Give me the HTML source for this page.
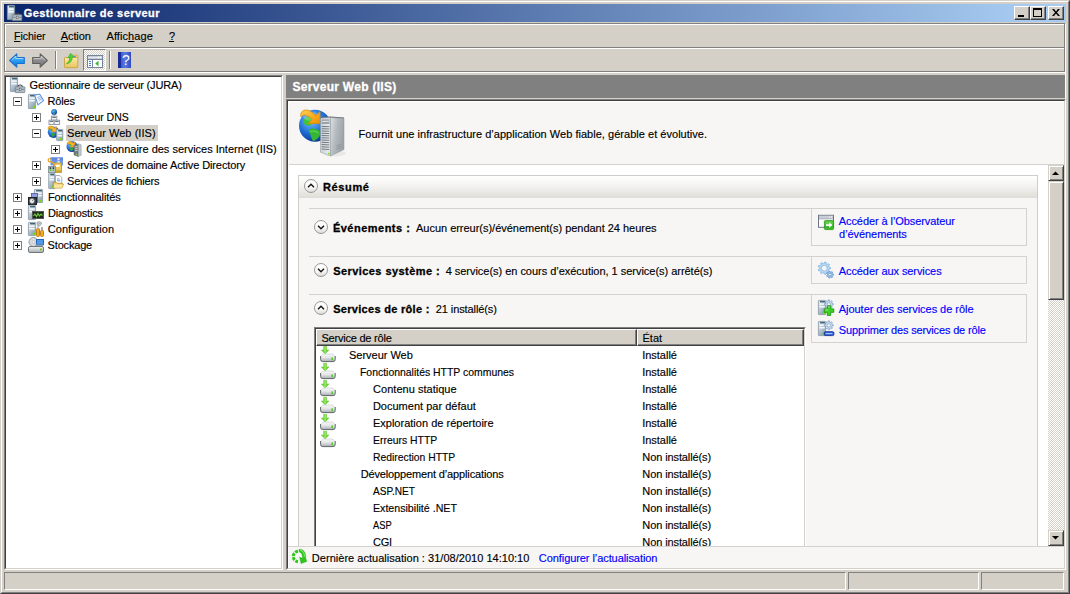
<!DOCTYPE html>
<html lang="fr">
<head>
<meta charset="utf-8">
<title>Gestionnaire de serveur</title>
<style>
*{box-sizing:border-box;margin:0;padding:0}
html,body{width:1070px;height:594px;overflow:hidden;background:#d4d0c8}
body{font-family:"Liberation Sans",sans-serif;font-size:11px;color:#000;position:relative}
.abs{position:absolute}
i{display:block}
.t{position:absolute;white-space:nowrap;line-height:13px;height:13px;transform-origin:0 0;-webkit-text-stroke:.15px currentColor}
.b{font-weight:bold;-webkit-text-stroke:.3px currentColor}
u{text-decoration:underline;text-underline-offset:1px}
svg{position:absolute;overflow:visible}
#frame{left:0;top:0;width:1070px;height:594px;border:1px solid;border-color:#d4d0c8 #404040 #404040 #d4d0c8}
#frame2{left:1px;top:1px;width:1068px;height:592px;border:1px solid;border-color:#fff #808080 #808080 #fff}
#title{left:4px;top:4px;width:1062px;height:18px;background:linear-gradient(to right,#0a246a 0%,#a6caf0 96%,#a6caf0 100%)}
.cap{position:absolute;top:6px;width:16px;height:14px;background:#d4d0c8;border:1px solid;border-color:#fff #404040 #404040 #fff;box-shadow:inset -1px -1px 0 #808080}
#rebarw{left:5px;top:24px;width:1061px;height:49px;border:1px solid #fff}
#rebar{left:4px;top:23px;width:1061px;height:49px;border:1px solid #808080}
#tree{left:4px;top:75px;width:279px;height:495px;background:#fff;border:1px solid;border-color:#808080 #fff #fff #808080}
#treei{left:5px;top:76px;width:277px;height:493px;border:1px solid;border-color:#404040 #d4d0c8 #d4d0c8 #404040}
.pm{position:absolute;width:9px;height:9px;border:1px solid #808080;background:#fff}
.pm:before{content:"";position:absolute;left:1px;top:3px;width:5px;height:1px;background:#000}
.pm.p:after{content:"";position:absolute;left:3px;top:1px;width:1px;height:5px;background:#000}
#hdr{left:286px;top:75px;width:779px;height:23px;background:#808080}
#det{left:286px;top:99px;width:780px;height:471px;background:#f7f6f4;border:1px solid;border-color:#808080 #fff #fff #808080}
#deti{left:287px;top:100px;width:778px;height:469px;border:1px solid;border-color:#404040 #d4d0c8 #d4d0c8 #404040;box-shadow:inset 1px 1px 0 #fff}
#view{left:289px;top:165px;width:759px;height:381px;background:#fff;overflow:hidden}
#resume{background:#f7f6f4;border:1px solid #cecdca}
#resumeh{background:linear-gradient(#fff 0%,#f4f3f0 45%,#dfddd7 100%)}
.a{color:#0000ff}
.hl{position:absolute;height:1px;background:#d3d2cf}
.box{position:absolute;border:1px solid #d3d2cf}
#tbl{background:#fff;border:1px solid;border-color:#808080 #fff #fff #808080}
#tbli{border:1px solid;border-color:#404040 #d4d0c8 #d4d0c8 #404040}
.th{position:absolute;height:17px;background:#d4d0c8;border:1px solid;border-color:#fff #404040 #404040 #fff;box-shadow:inset -1px -1px 0 #808080}
.sbb{position:absolute;background:#d4d0c8;border:1px solid;border-color:#d4d0c8 #404040 #404040 #d4d0c8;box-shadow:inset 1px 1px 0 #fff,inset -1px -1px 0 #808080}
.pane{position:absolute;top:572px;height:18px;border:1px solid;border-color:#808080 #fff #fff #808080}
</style>
</head>
<body>
<svg width="0" height="0" style="left:0;top:0"><defs>
<linearGradient id="gSrv" x1="0" y1="0" x2=".6" y2="1"><stop offset="0" stop-color="#e6edf2"/><stop offset=".45" stop-color="#c3d0da"/><stop offset="1" stop-color="#8ea2b1"/></linearGradient>
<linearGradient id="gSrvD" x1="0" y1="0" x2="1" y2="0"><stop offset="0" stop-color="#9aa3a8"/><stop offset="1" stop-color="#5d666b"/></linearGradient>
<radialGradient id="gGlobe" cx=".38" cy=".32" r=".75"><stop offset="0" stop-color="#7cc4ff"/><stop offset=".55" stop-color="#1f6fd6"/><stop offset="1" stop-color="#0b2f8c"/></radialGradient>
<linearGradient id="gBack" x1="0" y1="0" x2="0" y2="1"><stop offset="0" stop-color="#8fd4ff"/><stop offset=".5" stop-color="#2a9df4"/><stop offset="1" stop-color="#0b6fd0"/></linearGradient>
<linearGradient id="gFwd" x1="0" y1="0" x2="0" y2="1"><stop offset="0" stop-color="#c9c9c9"/><stop offset=".5" stop-color="#8c8c8c"/><stop offset="1" stop-color="#6f6f6f"/></linearGradient>
<linearGradient id="gFold" x1="0" y1="0" x2="0" y2="1"><stop offset="0" stop-color="#fbe9a6"/><stop offset="1" stop-color="#e9c45c"/></linearGradient>
<linearGradient id="gHelp" x1="0" y1="0" x2="1" y2="0"><stop offset="0" stop-color="#2b45b8"/><stop offset=".55" stop-color="#5a7be6"/><stop offset="1" stop-color="#2f49c0"/></linearGradient>
<linearGradient id="gCirc" x1="0" y1="0" x2="0" y2="1"><stop offset="0" stop-color="#ffffff"/><stop offset=".55" stop-color="#fbfbfa"/><stop offset="1" stop-color="#d9d7d2"/></linearGradient>
<linearGradient id="gDisk" x1="0" y1="0" x2="0" y2="1"><stop offset="0" stop-color="#f4f4f4"/><stop offset="1" stop-color="#a9adb0"/></linearGradient>
<linearGradient id="gBig" x1="0" y1="0" x2="1" y2="0"><stop offset="0" stop-color="#c9cfd3"/><stop offset="1" stop-color="#eceff1"/></linearGradient>
<linearGradient id="gBigS" x1="0" y1="0" x2="1" y2=".4"><stop offset="0" stop-color="#dfe2e4"/><stop offset=".5" stop-color="#b4b9bd"/><stop offset="1" stop-color="#9da3a8"/></linearGradient>
<linearGradient id="gOr" x1="0" y1="0" x2="1" y2="1"><stop offset="0" stop-color="#ffd257"/><stop offset=".6" stop-color="#f9a91a"/><stop offset="1" stop-color="#ee8f06"/></linearGradient>
<pattern id="pChk" width="2" height="2" patternUnits="userSpaceOnUse"><rect width="2" height="2" fill="#fff"/><rect width="1" height="1" fill="#d4d0c8"/><rect x="1" y="1" width="1" height="1" fill="#d4d0c8"/></pattern>
</defs></svg>
<div class="abs" id="frame"></div>
<div class="abs" id="frame2"></div>
<!-- TITLE BAR -->
<div class="abs" id="title"></div>
<svg style="left:7px;top:5px" width="16" height="16" viewBox="0 0 16 16"><rect x="0.4" y="0.4" width="7.2" height="14.2" rx=".6" fill="url(#gSrv)" stroke="#8797a4" stroke-width=".8"/><rect x="2" y="1.2" width="5" height="1.100" fill="#244a5c"/><rect x="1.3" y="3.4" width="5.4" height="1.500" fill="#f4f8fa"/><rect x="1.3" y="6" width="5.4" height="1.500" fill="#f4f8fa"/><path d="M7.800 10c0-2.600 4.600-2.600 4.600 0" fill="none" stroke="#3c4348" stroke-width="1.100"/><rect x="5.400" y="9.800" width="9.400" height="5.800" rx=".5" fill="#b4bec6" stroke="#76828b" stroke-width=".8"/><rect x="5.800" y="11.800" width="8.600" height="1.200" fill="#86929b"/><rect x="9.300" y="11.200" width="1.700" height="2.600" fill="#fafafa" stroke="#50585e" stroke-width=".5"/></svg>
<div class="t b" style="left:23.7px;top:7px;letter-spacing:0.450px;color:#fff;">Gestionnaire de serveur</div>
<div class="cap" style="left:1014px"><i class="abs" style="left:3px;top:8px;width:6px;height:2px;background:#000"></i></div>
<div class="cap" style="left:1030px"><i class="abs" style="left:2px;top:1px;width:9px;height:9px;border:1px solid #000;border-top-width:2px"></i></div>
<div class="cap" style="left:1048px"><svg style="left:3px;top:2px" width="8" height="7" viewBox="0 0 8 7"><path d="M0 0h2l2 2.5L6 0h2L5 3.5 8 7H6L4 4.5 2 7H0l3-3.5z" fill="#000"/></svg></div>
<!-- MENU + TOOLBAR -->
<div class="abs" id="rebarw"></div>
<div class="abs" id="rebar"></div>
<div class="abs" style="left:5px;top:47px;width:1059px;height:1px;background:#808080"></div>
<div class="abs" style="left:5px;top:48px;width:1059px;height:1px;background:#fff"></div>
<div class="abs" style="left:1065px;top:73px;width:1px;height:26px;background:#fff"></div>
<div class="t" style="left:13.8px;top:30px;transform:scaleX(0.9550);"><u>F</u>ichier</div>
<div class="t" style="left:60.8px;top:30px;letter-spacing:-0.125px;"><u>A</u>ction</div>
<div class="t" style="left:106.48px;top:30px;letter-spacing:0.087px;">Affic<u>h</u>age</div>
<div class="t" style="left:169px;top:30px;letter-spacing:-1px"><u>?</u></div>
<svg style="left:9px;top:53px" width="16" height="15" viewBox="0 0 16 15"><path d="M.700 7.500L7.800 .800v3.700h7.500v6H7.800v3.700z" fill="url(#gBack)" stroke="#1a6fd2" stroke-width="1.100" stroke-linejoin="round"/><path d="M2.600 7.300L7 3.200v2.300h7.200" fill="none" stroke="#c9ecff" stroke-width=".8" opacity=".8"/></svg><svg style="left:32px;top:53px" width="16" height="15" viewBox="0 0 16 15"><path d="M15.300 7.500L8.200 .800v3.700H.700v6h7.500v3.700z" fill="url(#gFwd)" stroke="#5f5f5f" stroke-width="1.100" stroke-linejoin="round"/><path d="M1.800 5.600h7.400V3.300l4.300 4" fill="none" stroke="#e6e6e6" stroke-width=".8" opacity=".7"/></svg><i class="abs" style="left:55px;top:51px;width:1px;height:18px;background:#808080"></i><i class="abs" style="left:56px;top:51px;width:1px;height:18px;background:#fff"></i><svg style="left:64px;top:52px" width="15" height="16" viewBox="0 0 15 16"><path d="M7 3.200h6.300l.500 .500v2.300H6z" fill="#f6dc86" stroke="#c9a342" stroke-width=".8"/><rect x="9.800" y="4" width="2" height="1" fill="#4f86e8"/><rect x=".500" y="5.500" width="13.300" height="10.200" rx=".600" fill="url(#gFold)" stroke="#c9a342" stroke-width=".9"/><path d="M2.300 11.800c2.300-1.200 3.400-3.400 3.300-6.200l-1.700 .300 2.700-4.600 3.300 3.700-1.700 .300c.300 3.200-1.700 6-5.900 6.500z" fill="#4cd238" stroke="#2fa320" stroke-width=".5" stroke-linejoin="round"/></svg><div class="abs" style="left:83px;top:49px;width:23px;height:22px;border:1px solid;border-color:#808080 #fff #fff #808080"></div><svg style="left:84px;top:50px" width="21" height="20" viewBox="0 0 21 20"><rect width="21" height="20" fill="url(#pChk)"/></svg><svg style="left:87px;top:55px" width="16" height="13" viewBox="0 0 16 13"><rect x=".500" y=".500" width="15" height="12" fill="#fff" stroke="#74849e"/><rect x="1" y="1" width="14" height="3" fill="#c3cbd8"/><rect x="1" y="2" width="14" height="1" fill="#e4e8ee"/><path d="M1 4.500h14" stroke="#74849e"/><rect x="11" y="1.500" width="1" height="1.500" fill="#fff"/><rect x="13" y="1.500" width="1" height="1.500" fill="#fff"/><path d="M5.500 4.500v8" stroke="#74849e"/><rect x="2" y="6" width="2" height="1" fill="#3f7fd8"/><rect x="2" y="8" width="2" height="1" fill="#3f7fd8"/><rect x="2" y="10" width="2" height="1" fill="#3f7fd8"/><path d="M8.200 8.500l3.300-2.700v5.400z" fill="#38b435"/></svg><i class="abs" style="left:109px;top:51px;width:1px;height:18px;background:#808080"></i><i class="abs" style="left:110px;top:51px;width:1px;height:18px;background:#fff"></i><svg style="left:118px;top:52px" width="13" height="16" viewBox="0 0 13 16"><rect width="13" height="16" fill="url(#gHelp)"/><rect width="3" height="16" fill="#1a2a96"/><text x="7.800" y="13" font-family="Liberation Sans,sans-serif" font-size="14" fill="#fff" text-anchor="middle">?</text></svg>
<!-- TREE -->
<div class="abs" id="tree"></div>
<div class="abs" id="treei"></div>
<svg style="left:10px;top:77px" width="16" height="16" viewBox="0 0 16 16"><rect x="0.4" y="0.4" width="7.2" height="14.2" rx=".6" fill="url(#gSrv)" stroke="#8797a4" stroke-width=".8"/><rect x="2" y="1.2" width="5" height="1.100" fill="#244a5c"/><rect x="1.3" y="3.4" width="5.4" height="1.500" fill="#f4f8fa"/><rect x="1.3" y="6" width="5.4" height="1.500" fill="#f4f8fa"/><path d="M7.800 10c0-2.600 4.600-2.600 4.600 0" fill="none" stroke="#3c4348" stroke-width="1.100"/><rect x="5.400" y="9.800" width="9.400" height="5.800" rx=".5" fill="#b4bec6" stroke="#76828b" stroke-width=".8"/><rect x="5.800" y="11.800" width="8.600" height="1.200" fill="#86929b"/><rect x="9.300" y="11.200" width="1.700" height="2.600" fill="#fafafa" stroke="#50585e" stroke-width=".5"/></svg>
<div class="t" style="left:29.54px;top:79px;letter-spacing:-0.141px;">Gestionnaire de serveur (JURA)</div>
<div class="pm" style="left:13px;top:97px"></div>
<svg style="left:28px;top:93px" width="16" height="16" viewBox="0 0 16 16"><rect x="0.4" y="1.4" width="7.2" height="14.2" rx=".6" fill="url(#gSrv)" stroke="#8797a4" stroke-width=".8"/><rect x="2" y="2.2" width="5" height="1.100" fill="#244a5c"/><rect x="1.3" y="4.4" width="5.4" height="1.500" fill="#f4f8fa"/><rect x="1.3" y="7" width="5.4" height="1.500" fill="#f4f8fa"/><rect x="4.8" y="12.8" width="2.200" height="2.200" fill="#6fdc1a"/><path d="M6.600 1.900l5.200-.600 3.700 6.300-5.500 4.300z" fill="#f6f9fe" stroke="#6496dc" stroke-width="1.100" stroke-linejoin="round"/><path d="M9.300 4.600l2.600-1.100M10.100 6.100l3-1.500M10.900 7.600l3-1.700" stroke="#7aa6e6" stroke-width=".8"/></svg>
<div class="t" style="left:47.52px;top:95px;letter-spacing:-0.158px;">Rôles</div>
<div class="pm p" style="left:32px;top:113px"></div>
<svg style="left:48px;top:109px" width="16" height="16" viewBox="0 0 16 16"><circle cx="6.1" cy="2.9" r="2.9" fill="url(#gGlobe)"/><path d="M4.408333333333333 1.45q0.9666666666666667 -0.9666666666666667 1.9333333333333333 -0.48333333333333334q-0.48333333333333334 0.9666666666666667 -0.725 1.45q-0.9666666666666667 0.24166666666666667 -1.2083333333333333 -0.9666666666666667z" fill="#3fbf3a"/><path d="M5.133333333333333 3.3833333333333333q1.2083333333333333 -0.24166666666666667 1.6916666666666667 0.725q-0.48333333333333334 1.2083333333333333 -1.2083333333333333 1.2083333333333333q-0.725 -0.725 -0.48333333333333334 -1.9333333333333333z" fill="#35a935"/><path d="M6.100 5.800v1.400" stroke="#8a949c" stroke-width="1"/><rect x="3.4" y="7.2" width="5.4" height="4" fill="#f2f4f6" stroke="#8a949c" stroke-width=".9"/><rect x="4.3" y="8.0" width="3.6000000000000005" height=".900" fill="#5a6a78"/><rect x="1" y="11.2" width="5.2" height="4.3" fill="#f2f4f6" stroke="#8a949c" stroke-width=".9"/><rect x="1.9" y="12.0" width="3.4000000000000004" height=".900" fill="#5a6a78"/><rect x="6.2" y="11.2" width="5.4" height="4.3" fill="#f2f4f6" stroke="#8a949c" stroke-width=".9"/><rect x="7.1000000000000005" y="12.0" width="3.6000000000000005" height=".900" fill="#5a6a78"/></svg>
<div class="t" style="left:67.01px;top:111px;transform:scaleX(0.9529);">Serveur DNS</div>
<div class="pm" style="left:32px;top:129px"></div>
<svg style="left:48px;top:125px" width="16" height="16" viewBox="0 0 16 16"><circle cx="5.6" cy="7.2" r="5.8" fill="url(#gGlobe)"/><path d="M2.2166666666666663 4.300000000000001q1.9333333333333333 -1.9333333333333333 3.8666666666666667 -0.9666666666666667q-0.9666666666666667 1.9333333333333333 -1.45 2.9q-1.9333333333333333 0.48333333333333334 -2.4166666666666665 -1.9333333333333333z" fill="#3fbf3a"/><path d="M3.666666666666666 8.166666666666666q2.4166666666666665 -0.48333333333333334 3.3833333333333333 1.45q-0.9666666666666667 2.4166666666666665 -2.4166666666666665 2.4166666666666665q-1.45 -1.45 -0.9666666666666667 -3.8666666666666667z" fill="#35a935"/><g transform="translate(-0.3 0.2) scale(1.0)"><path d="M6.700 2.800C5.200 .800 2.600 .300 1 1.600 .300 2.300 .300 3.400.600 4.200 1.400 3 2.900 2.700 5.200 4.800L3.500 6.600H8.600V1.300z" fill="#f8b42a" stroke="#d98c06" stroke-width=".6" stroke-linejoin="round"/></g><rect x="8.6" y="4.4" width="6.2" height="11.2" rx=".6" fill="url(#gSrv)" stroke="#8797a4" stroke-width=".8"/><rect x="10.2" y="5.2" width="4" height="1.100" fill="#244a5c"/><rect x="9.5" y="7.4" width="4.4" height="1.500" fill="#f4f8fa"/><rect x="9.5" y="10" width="4.4" height="1.500" fill="#f4f8fa"/><rect x="12.0" y="12.8" width="2.200" height="2.200" fill="#6fdc1a"/></svg>
<div class="abs" style="left:66px;top:125px;width:92px;height:16px;background:#d4d0c8"></div>
<div class="t" style="left:67.0px;top:127px;letter-spacing:0.050px;">Serveur Web (IIS)</div>
<div class="pm p" style="left:51px;top:145px"></div>
<svg style="left:67px;top:141px" width="16" height="16" viewBox="0 0 16 16"><circle cx="5" cy="5.5" r="5.5" fill="url(#gGlobe)"/><path d="M1.791666666666667 2.75q1.8333333333333333 -1.8333333333333333 3.6666666666666665 -0.9166666666666666q-0.9166666666666666 1.8333333333333333 -1.375 2.75q-1.8333333333333333 0.4583333333333333 -2.2916666666666665 -1.8333333333333333z" fill="#3fbf3a"/><path d="M3.166666666666667 6.416666666666667q2.2916666666666665 -0.4583333333333333 3.208333333333333 1.375q-0.9166666666666666 2.2916666666666665 -2.2916666666666665 2.2916666666666665q-1.375 -1.375 -0.9166666666666666 -3.6666666666666665z" fill="#35a935"/><g transform="translate(-0.2 -0.3) scale(0.95)"><path d="M6.700 2.800C5.200 .800 2.600 .300 1 1.600 .300 2.300 .300 3.400.600 4.200 1.400 3 2.900 2.700 5.200 4.800L3.500 6.600H8.600V1.300z" fill="#f8b42a" stroke="#d98c06" stroke-width=".6" stroke-linejoin="round"/></g><path d="M7 4.200l4.400-1.300v12.600l-4.400-1.500z" fill="#747c82" stroke="#575f65" stroke-width=".5"/><path d="M11.400 2.900l2.800 .900v10.400l-2.800 1.300z" fill="#c2c8cc" stroke="#8b9399" stroke-width=".5"/><path d="M7.800 6l2.800-.500M7.800 7.800l2.800-.400M7.800 9.600l2.800-.300" stroke="#d9dfe3" stroke-width=".8"/><rect x="8.800" y="13" width="1.300" height="1.300" fill="#7bd11f"/></svg>
<div class="t" style="left:86.37px;top:143px;letter-spacing:-0.010px;">Gestionnaire des services Internet (IIS)</div>
<div class="pm p" style="left:32px;top:161px"></div>
<svg style="left:48px;top:157px" width="16" height="16" viewBox="0 0 16 16"><rect x="2.500" y=".400" width="12.500" height="8" fill="#6c97ea"/><rect x="2.500" y=".400" width="12.500" height="3" fill="#4f7fe0" opacity=".6"/><circle cx="10.500" cy="2.300" r="1.200" fill="#f0d9c0"/><path d="M8.600 6c0-2.800 3.800-2.800 3.800 0z" fill="#e8e8f0"/><rect x="5.500" y="6" width="8" height="9.500" fill="#e8c65e" stroke="#b89226" stroke-width=".8"/><rect x="5.900" y="13.300" width="7.200" height="1.800" fill="#cfa63a"/><rect x="7.200" y="7.800" width="4.600" height="2.200" fill="#fffbe8"/><circle cx="1.900" cy="3.200" r="1.700" fill="none" stroke="#f0a01c" stroke-width="1.200"/><path d="M3.200 4.400l4 3.800" stroke="#f0a01c" stroke-width="1.300"/><rect x=".500" y="9.500" width="7" height="6.200" fill="#b9c4cc" stroke="#7c8a94" stroke-width=".8"/><rect x="1.600" y="10.300" width="1.600" height="1.600" fill="#2a2e30"/><rect x="4.600" y="10.300" width="1.600" height="1.600" fill="#2a2e30"/><rect x="1.600" y="12.300" width="1.600" height="1.600" fill="#4fd21a"/><rect x="4.600" y="12.300" width="1.600" height="1.600" fill="#4fd21a"/></svg>
<div class="t" style="left:67.0px;top:159px;letter-spacing:-0.112px;">Services de domaine Active Directory</div>
<div class="pm p" style="left:32px;top:177px"></div>
<svg style="left:48px;top:173px" width="16" height="16" viewBox="0 0 16 16"><rect x="0.7" y="0.4" width="6.2" height="15.2" rx=".6" fill="url(#gSrv)" stroke="#8797a4" stroke-width=".8"/><rect x="2.3" y="1.2" width="4" height="1.100" fill="#244a5c"/><rect x="1.6" y="3.4" width="4.4" height="1.500" fill="#f4f8fa"/><rect x="1.6" y="6" width="4.4" height="1.500" fill="#f4f8fa"/><rect x="4.1" y="12.8" width="2.200" height="2.200" fill="#6fdc1a"/><path d="M7.500 2.500h4.300l2 2v7h-6.300z" fill="#fff" stroke="#909ca6" stroke-width=".8"/><path d="M9 6h2.600M9 7.800h3.400" stroke="#5f92dc" stroke-width=".9"/><path d="M5.300 9.300h2.800l.900 1h5.200v1l1.300 0-1.700 3.700h-8.500z" fill="#f3d070" stroke="#b98d1c" stroke-width=".8" stroke-linejoin="round"/><path d="M6.500 11.500h8.700l-1.500 3.300h-8.200z" fill="#fbe6a0"/></svg>
<div class="t" style="left:67.0px;top:175px;letter-spacing:-0.149px;">Services de fichiers</div>
<div class="pm p" style="left:13px;top:193px"></div>
<svg style="left:28px;top:189px" width="16" height="16" viewBox="0 0 16 16"><rect x="6.4" y="0.4" width="8.2" height="13.2" rx=".6" fill="url(#gSrv)" stroke="#8797a4" stroke-width=".8"/><rect x="8" y="1.2" width="6" height="1.100" fill="#244a5c"/><rect x="7.3" y="3.4" width="6.4" height="1.500" fill="#f4f8fa"/><rect x="7.3" y="6" width="6.4" height="1.500" fill="#f4f8fa"/><rect x="11.8" y="10.8" width="2.200" height="2.200" fill="#6fdc1a"/><rect x="3.5" y="4.5" width="6" height="9" fill="#8f9fe0" stroke="#5562a8" stroke-width=".9"/><rect x="0.5" y="8.5" width="8" height="7" fill="#3a3f44" stroke="#1d2022"/><circle cx="4" cy="12" r="2.4" fill="#e9eef2" stroke="#888" stroke-width=".6"/><path d="M4 12l1.5-1.5" stroke="#555" stroke-width=".7"/></svg>
<div class="t" style="left:47.92px;top:191px;letter-spacing:-0.074px;">Fonctionnalités</div>
<div class="pm p" style="left:13px;top:209px"></div>
<svg style="left:28px;top:205px" width="16" height="16" viewBox="0 0 16 16"><rect x="0.4" y="0.4" width="7.2" height="14.2" rx=".6" fill="url(#gSrv)" stroke="#8797a4" stroke-width=".8"/><rect x="2" y="1.2" width="5" height="1.100" fill="#244a5c"/><rect x="1.3" y="3.4" width="5.4" height="1.500" fill="#f4f8fa"/><rect x="1.3" y="6" width="5.4" height="1.500" fill="#f4f8fa"/><rect x="4.8" y="11.8" width="2.200" height="2.200" fill="#6fdc1a"/><rect x="4.5" y="6.5" width="11" height="7" fill="#1c2a1a" stroke="#555"/><path d="M5.5 11l1.5-2 1.5 2.5 1.5-3 1.5 2.5 1.5-2 1.5 1.5" fill="none" stroke="#6fd03a" stroke-width="1.1"/></svg>
<div class="t" style="left:47.9px;top:207px;letter-spacing:-0.172px;">Diagnostics</div>
<div class="pm p" style="left:13px;top:225px"></div>
<svg style="left:28px;top:221px" width="16" height="16" viewBox="0 0 16 16"><rect x="0.4" y="1.4" width="7.2" height="13.2" rx=".6" fill="url(#gSrv)" stroke="#8797a4" stroke-width=".8"/><rect x="2" y="2.2" width="5" height="1.100" fill="#244a5c"/><rect x="1.3" y="4.4" width="5.4" height="1.500" fill="#f4f8fa"/><rect x="1.3" y="7" width="5.4" height="1.500" fill="#f4f8fa"/><rect x="4.8" y="11.8" width="2.200" height="2.200" fill="#6fdc1a"/><path d="M9 1.5c2-1.5 4-.5 4.5 1.5l-2 1.8-1.8-.6z" fill="#d5dadd" stroke="#7d868c" stroke-width=".8"/><path d="M9.5 4l4-3" stroke="#aeb5ba" stroke-width="1.5"/><rect x="8.5" y="7.5" width="3" height="8" rx="1" fill="#f5a91a" stroke="#b26f06" stroke-width=".8"/><rect x="9.3" y="4.5" width="1.4" height="3" fill="#aeb5ba"/><rect x="12.5" y="9.5" width="3" height="6" rx="1" fill="#f5a91a" stroke="#b26f06" stroke-width=".8"/><rect x="13.3" y="6" width="1.4" height="3.5" fill="#888"/></svg>
<div class="t" style="left:47.68px;top:223px;letter-spacing:0.084px;">Configuration</div>
<div class="pm p" style="left:13px;top:241px"></div>
<svg style="left:28px;top:237px" width="16" height="16" viewBox="0 0 16 16"><circle cx="5.5" cy="5" r="4.5" fill="#d9dde0" stroke="#8a9298" stroke-width=".9"/><circle cx="5.5" cy="5" r="1.4" fill="#fff" stroke="#999" stroke-width=".5"/><rect x="8.5" y="2.5" width="7" height="5" fill="#4d9be8" stroke="#2866b3"/><rect x="7.5" y="7.5" width="8" height="1.5" fill="#8fa4b8"/><rect x="0.5" y="9.5" width="15" height="6" rx="1.5" fill="url(#gDisk)" stroke="#70787e"/><rect x="12" y="11.5" width="2" height="2" fill="#6fd11c"/></svg>
<div class="t" style="left:47.6px;top:239px;letter-spacing:-0.174px;">Stockage</div>
<!-- DETAILS -->
<div class="abs" id="hdr"></div>
<div class="t b" style="left:292.53px;top:80px;letter-spacing:0.284px;font-size:12px;line-height:14px;height:14px;color:#fff;">Serveur Web (IIS)</div>
<div class="abs" id="det"></div>
<div class="abs" id="deti"></div>
<svg style="left:299px;top:107px" width="48" height="52" viewBox="0 0 48 52"><ellipse cx="36" cy="46.500" rx="11" ry="3" fill="#e9e8e5"/><circle cx="16" cy="18.700" r="16" fill="url(#gGlobe)"/><path d="M4.500 14.500C5.500 9 12 6.500 18 8.500 20 10 16.500 12 17.500 14.500 15.500 17.500 12.500 15.500 11.500 18.500 9.500 19.500 8.500 17.500 7 18 5.500 17.500 4 16.500 4.500 14.500z" fill="#3cc43a"/><path d="M9.500 23C13 20.500 19.500 21.500 21.500 25 21.500 29.500 17.500 33.500 14 34 12 31.500 12 27.500 9.500 23z" fill="#35b535"/><path d="M11 25c3-1.500 6-1 8 1" fill="none" stroke="#6fe25a" stroke-width="1.200" opacity=".7"/><ellipse cx="12" cy="9.500" rx="8" ry="4.500" fill="#fff" opacity=".22"/><path d="M16.800 8.800C13 4 7 1 3 4.500 1.500 6 1.500 8.500 2 10 3.500 7.500 7 6.500 13.200 12.400L9 16.600H21V4.600z" fill="url(#gOr)" stroke="#d98a06" stroke-width=".8" stroke-linejoin="round"/><path d="M21.500 10.300L31.400 9.600 45 10.500 45 12 31.400 12 21.500 12z" fill="#5f676d"/><path d="M21.500 11L31.400 10.600V49L21.500 45.200z" fill="url(#gBig)" stroke="#8a9298" stroke-width=".5"/><path d="M31.400 10.600L45 11.200V42.600L31.400 49z" fill="url(#gBigS)" stroke="#8a9298" stroke-width=".5"/><path d="M22.600 12.600l7.800-.300v4.600l-7.800.100z" fill="#9aa3a9"/><path d="M23.200 14.400l6.600-.100" stroke="#eef1f3" stroke-width=".9"/><path d="M22.700 19.50l7.600 0.20" stroke="#727b82" stroke-width="1"/><path d="M22.700 21.75l7.600 0.23" stroke="#727b82" stroke-width="1"/><path d="M22.700 24.00l7.600 0.26" stroke="#727b82" stroke-width="1"/><path d="M22.700 26.25l7.600 0.29" stroke="#727b82" stroke-width="1"/><path d="M22.700 28.50l7.600 0.32" stroke="#727b82" stroke-width="1"/><path d="M22.700 30.75l7.600 0.35" stroke="#727b82" stroke-width="1"/><path d="M22.700 33.00l7.600 0.38" stroke="#727b82" stroke-width="1"/><path d="M22.700 35.25l7.600 0.41" stroke="#727b82" stroke-width="1"/><path d="M22.700 37.50l7.600 0.44" stroke="#727b82" stroke-width="1"/><path d="M22.700 39.75l7.600 0.47" stroke="#727b82" stroke-width="1"/><path d="M22.700 42.00l7.600 0.50" stroke="#727b82" stroke-width="1"/><rect x="29" y="45.800" width="1.700" height="1.700" fill="#7fe01f"/><path d="M37.500 38.800l5-1.800M37.500 40.600l5-1.800M37.500 42.400l5-1.800" stroke="#8d949a" stroke-width=".7"/></svg>
<div class="t" style="left:358.51px;top:128px;letter-spacing:0.028px;">Fournit une infrastructure d’application Web fiable, gérable et évolutive.</div>
<div class="hl" style="left:289px;top:164px;width:775px"></div>
<div class="abs" id="view">
<div class="abs" id="resume" style="left:9px;top:10px;width:740px;height:600px"></div>
<div class="abs" id="resumeh" style="left:10px;top:11px;width:738px;height:22px"></div>
<svg style="left:15px;top:14px" width="14" height="14" viewBox="0 0 14 14"><circle cx="7" cy="7" r="6.500" fill="url(#gCirc)" stroke="#8e8e8e" stroke-width=".9"/><path d="M4 8.200l3-3 3 3" fill="none" stroke="#1a1a1a" stroke-width="1.500"/></svg>
<div class="t b" style="left:33.91px;top:16px;letter-spacing:0.653px;">Résumé</div>
<div class="hl" style="left:20px;top:43px;width:503px"></div>
<div class="hl" style="left:20px;top:91px;width:503px"></div>
<div class="hl" style="left:20px;top:129px;width:503px"></div>
<svg style="left:25px;top:55px" width="14" height="14" viewBox="0 0 14 14"><circle cx="7" cy="7" r="6.500" fill="url(#gCirc)" stroke="#8e8e8e" stroke-width=".9"/><path d="M4 5.800l3 3 3-3" fill="none" stroke="#1a1a1a" stroke-width="1.500"/></svg>
<div class="t b" style="left:43.94px;top:57px;letter-spacing:0.488px;">Événements :</div>
<div class="t" style="left:127.04px;top:57px;letter-spacing:-0.023px;">Aucun erreur(s)/événement(s) pendant 24 heures</div>
<svg style="left:25px;top:98px" width="14" height="14" viewBox="0 0 14 14"><circle cx="7" cy="7" r="6.500" fill="url(#gCirc)" stroke="#8e8e8e" stroke-width=".9"/><path d="M4 5.800l3 3 3-3" fill="none" stroke="#1a1a1a" stroke-width="1.500"/></svg>
<div class="t b" style="left:44.16px;top:100px;letter-spacing:0.439px;">Services système :</div>
<div class="t" style="left:156.65px;top:100px;letter-spacing:-0.027px;">4 service(s) en cours d’exécution, 1 service(s) arrêté(s)</div>
<svg style="left:25px;top:136px" width="14" height="14" viewBox="0 0 14 14"><circle cx="7" cy="7" r="6.500" fill="url(#gCirc)" stroke="#8e8e8e" stroke-width=".9"/><path d="M4 8.200l3-3 3 3" fill="none" stroke="#1a1a1a" stroke-width="1.500"/></svg>
<div class="t b" style="left:44.16px;top:138px;letter-spacing:0.304px;">Services de rôle :</div>
<div class="t" style="left:146.79px;top:138px;letter-spacing:-0.095px;">21 installé(s)</div>
<div class="box" style="left:522px;top:43px;width:216px;height:38px"></div>
<div class="box" style="left:522px;top:91px;width:216px;height:28px"></div>
<div class="box" style="left:522px;top:129px;width:216px;height:49px"></div>
<svg style="left:529px;top:49px" width="16" height="16" viewBox="0 0 16 16"><rect x=".500" y="1.300" width="15" height="12" fill="#fff" stroke="#6c7383"/><rect x="1" y="1.800" width="14" height="2.600" fill="#c9cdd8"/><path d="M1 4.800h14" stroke="#8a90a0" stroke-width=".8"/><rect x="11" y="2.500" width="1" height="1" fill="#fff"/><rect x="13" y="2.500" width="1" height="1" fill="#fff"/><rect x="6.400" y="6.600" width="9.200" height="9" rx="1" fill="#3db82b" stroke="#2a9a1c" stroke-width=".8"/><rect x="7.200" y="7.300" width="7.600" height="3" rx=".5" fill="#7fe06a" opacity=".55"/><path d="M8 10.300h3.200v-1.900l3.300 2.700-3.300 2.700v-1.900h-3.200z" fill="#fff"/></svg>
<div class="t a" style="left:549.74px;top:50px;letter-spacing:-0.078px;">Accéder à l’Observateur</div>
<div class="t a" style="left:550.08px;top:63px;letter-spacing:-0.069px;">d’événements</div>
<svg style="left:529px;top:97px" width="16" height="16" viewBox="0 0 16 16"><path d="M12.47 5.55L12.47 6.85L10.76 7.31L10.43 8.22L11.44 9.67L10.61 10.66L9.00 9.92L8.17 10.40L8.01 12.16L6.73 12.38L5.98 10.79L5.03 10.62L3.78 11.86L2.66 11.22L3.10 9.51L2.49 8.77L0.73 8.92L0.28 7.70L1.73 6.68L1.73 5.72L0.28 4.70L0.73 3.48L2.49 3.63L3.10 2.89L2.66 1.18L3.78 0.54L5.03 1.78L5.98 1.61L6.73 0.02L8.01 0.24L8.17 2.00L9.00 2.48L10.61 1.74L11.44 2.73L10.43 4.18L10.76 5.09z" fill="#b9d9f3" stroke="#7fb2e2" stroke-width=".8"/><circle cx="6.300" cy="6.200" r="2.900" fill="#f7f6f3" stroke="#8dbce6" stroke-width=".9"/><path d="M15.57 12.12L15.57 13.08L14.38 13.37L14.09 13.98L14.60 15.09L13.85 15.69L12.88 14.94L12.22 15.09L11.68 16.19L10.74 15.97L10.72 14.75L10.19 14.33L9.00 14.58L8.58 13.71L9.52 12.94L9.52 12.26L8.58 11.49L9.00 10.62L10.19 10.87L10.72 10.45L10.74 9.23L11.68 9.01L12.22 10.11L12.88 10.26L13.85 9.51L14.60 10.11L14.09 11.22L14.38 11.83z" fill="#9cc0e8" stroke="#5e8fd0" stroke-width=".7"/><circle cx="12" cy="12.600" r="1.200" fill="#f7f6f3" stroke="#5e8fd0" stroke-width=".5"/></svg>
<div class="t a" style="left:549.74px;top:100px;letter-spacing:-0.086px;">Accéder aux services</div>
<svg style="left:529px;top:135px" width="16" height="16" viewBox="0 0 16 16"><rect x="0.4" y="0.4" width="7.2" height="14.2" rx=".6" fill="url(#gSrv)" stroke="#8797a4" stroke-width=".8"/><rect x="2" y="1.2" width="5" height="1.100" fill="#244a5c"/><rect x="1.3" y="3.4" width="5.4" height="1.500" fill="#f4f8fa"/><rect x="1.3" y="6" width="5.4" height="1.500" fill="#f4f8fa"/><rect x="4.8" y="11.8" width="2.200" height="2.200" fill="#6fdc1a"/><path d="M15.27 3.77L15.27 4.83L13.88 5.17L13.59 5.86L14.33 7.09L13.59 7.83L12.36 7.09L11.67 7.38L11.33 8.77L10.27 8.77L9.93 7.38L9.24 7.09L8.01 7.83L7.27 7.09L8.01 5.86L7.72 5.17L6.33 4.83L6.33 3.77L7.72 3.43L8.01 2.74L7.27 1.51L8.01 0.77L9.24 1.51L9.93 1.22L10.27 -0.17L11.33 -0.17L11.67 1.22L12.36 1.51L13.59 0.77L14.33 1.51L13.59 2.74L13.88 3.43z" fill="#cfe0f2" stroke="#7f9fc8" stroke-width=".8"/><circle cx="10.800" cy="4.300" r="1.700" fill="#f7f6f3" stroke="#7f9fc8" stroke-width=".7"/><path d="M9.300 5.800h3.400v3.100h3.100v3.400h-3.100v3.100h-3.400v-3.100h-3.100v-3.400h3.100z" fill="#3fd027" stroke="#1b9a0f" stroke-width=".9" stroke-linejoin="round"/><path d="M10.200 6.900h1.600M7.200 10h2.900" stroke="#a4f28e" stroke-width=".9"/></svg>
<div class="t a" style="left:549.74px;top:138px;letter-spacing:-0.034px;">Ajouter des services de rôle</div>
<svg style="left:529px;top:156px" width="16" height="16" viewBox="0 0 16 16"><rect x="0.4" y="0.4" width="7.2" height="14.2" rx=".6" fill="url(#gSrv)" stroke="#8797a4" stroke-width=".8"/><rect x="2" y="1.2" width="5" height="1.100" fill="#244a5c"/><rect x="1.3" y="3.4" width="5.4" height="1.500" fill="#f4f8fa"/><rect x="1.3" y="6" width="5.4" height="1.500" fill="#f4f8fa"/><rect x="4.8" y="11.8" width="2.200" height="2.200" fill="#6fdc1a"/><path d="M15.27 3.77L15.27 4.83L13.88 5.17L13.59 5.86L14.33 7.09L13.59 7.83L12.36 7.09L11.67 7.38L11.33 8.77L10.27 8.77L9.93 7.38L9.24 7.09L8.01 7.83L7.27 7.09L8.01 5.86L7.72 5.17L6.33 4.83L6.33 3.77L7.72 3.43L8.01 2.74L7.27 1.51L8.01 0.77L9.24 1.51L9.93 1.22L10.27 -0.17L11.33 -0.17L11.67 1.22L12.36 1.51L13.59 0.77L14.33 1.51L13.59 2.74L13.88 3.43z" fill="#cfe0f2" stroke="#7f9fc8" stroke-width=".8"/><circle cx="10.800" cy="4.300" r="1.700" fill="#f7f6f3" stroke="#7f9fc8" stroke-width=".7"/><rect x="6.200" y="10.700" width="9.700" height="3.900" rx="1.300" fill="#2c55d6" stroke="#15329a" stroke-width=".9"/><rect x="7.600" y="11.900" width="6.900" height="1.300" fill="#9cc0f6"/></svg>
<div class="t a" style="left:549.85px;top:159px;letter-spacing:-0.160px;">Supprimer des services de rôle</div>
<div class="abs" id="tbl" style="left:25px;top:162px;width:492px;height:300px"></div>
<div class="abs" id="tbli" style="left:26px;top:163px;width:490px;height:298px"></div>
<div class="th" style="left:27px;top:164px;width:321px"></div>
<div class="th" style="left:348px;top:164px;width:167px"></div>
<div class="t" style="left:32.5px;top:167px;letter-spacing:-0.220px;">Service de rôle</div>
<div class="t" style="left:353.5px;top:167px;">État</div>
<svg style="left:31px;top:181px" width="16" height="17" viewBox="0 0 16 17"><path d="M3.600 .300h3v3.600h2.400l-3.900 4.100-3.900-4.100h2.400z" fill="#6fd637" stroke="#55bd28" stroke-width=".4"/><path d="M5.100 .600v6.200" stroke="#b9f293" stroke-width=".9"/><path d="M2.800 7.900h10l2.600 3h-15.200z" fill="#efefef" stroke="#c4c6c8" stroke-width=".5"/><path d="M.600 10.400h14.600v3a2.200 2.200 0 0 1-2.200 2.200h-10.200a2.200 2.200 0 0 1-2.200-2.200z" fill="url(#gDisk)"/><path d="M.600 10v3.400a2.200 2.200 0 0 0 2.200 2.200h10.200a2.200 2.200 0 0 0 2.200-2.200v-3.400" fill="none" stroke="#5f666b" stroke-width="1"/><rect x="11.400" y="11.400" width="1.500" height="2.800" fill="#44d11c"/></svg>
<div class="t" style="left:60.01px;top:184px;letter-spacing:-0.017px;">Serveur Web</div>
<div class="t" style="left:353.18px;top:184px;letter-spacing:-0.010px;">Installé</div>
<svg style="left:31px;top:198px" width="16" height="17" viewBox="0 0 16 17"><path d="M3.600 .300h3v3.600h2.400l-3.900 4.100-3.900-4.100h2.400z" fill="#6fd637" stroke="#55bd28" stroke-width=".4"/><path d="M5.100 .600v6.200" stroke="#b9f293" stroke-width=".9"/><path d="M2.800 7.900h10l2.600 3h-15.200z" fill="#efefef" stroke="#c4c6c8" stroke-width=".5"/><path d="M.600 10.400h14.600v3a2.200 2.200 0 0 1-2.200 2.200h-10.200a2.200 2.200 0 0 1-2.200-2.200z" fill="url(#gDisk)"/><path d="M.600 10v3.400a2.200 2.200 0 0 0 2.200 2.200h10.200a2.200 2.200 0 0 0 2.200-2.200v-3.400" fill="none" stroke="#5f666b" stroke-width="1"/><rect x="11.400" y="11.400" width="1.500" height="2.800" fill="#44d11c"/></svg>
<div class="t" style="left:71.22px;top:201px;transform:scaleX(0.9483);">Fonctionnalités HTTP communes</div>
<div class="t" style="left:353.18px;top:201px;letter-spacing:-0.010px;">Installé</div>
<svg style="left:31px;top:215px" width="16" height="17" viewBox="0 0 16 17"><path d="M3.600 .300h3v3.600h2.400l-3.900 4.100-3.900-4.100h2.400z" fill="#6fd637" stroke="#55bd28" stroke-width=".4"/><path d="M5.100 .600v6.200" stroke="#b9f293" stroke-width=".9"/><path d="M2.800 7.900h10l2.600 3h-15.200z" fill="#efefef" stroke="#c4c6c8" stroke-width=".5"/><path d="M.600 10.400h14.600v3a2.200 2.200 0 0 1-2.200 2.200h-10.200a2.200 2.200 0 0 1-2.200-2.200z" fill="url(#gDisk)"/><path d="M.600 10v3.400a2.200 2.200 0 0 0 2.200 2.200h10.200a2.200 2.200 0 0 0 2.200-2.200v-3.400" fill="none" stroke="#5f666b" stroke-width="1"/><rect x="11.400" y="11.400" width="1.500" height="2.800" fill="#44d11c"/></svg>
<div class="t" style="left:84.08px;top:218px;letter-spacing:0.024px;">Contenu statique</div>
<div class="t" style="left:353.18px;top:218px;letter-spacing:-0.010px;">Installé</div>
<svg style="left:31px;top:232px" width="16" height="17" viewBox="0 0 16 17"><path d="M3.600 .300h3v3.600h2.400l-3.900 4.100-3.900-4.100h2.400z" fill="#6fd637" stroke="#55bd28" stroke-width=".4"/><path d="M5.100 .600v6.200" stroke="#b9f293" stroke-width=".9"/><path d="M2.800 7.900h10l2.600 3h-15.200z" fill="#efefef" stroke="#c4c6c8" stroke-width=".5"/><path d="M.600 10.400h14.600v3a2.200 2.200 0 0 1-2.200 2.200h-10.200a2.200 2.200 0 0 1-2.200-2.200z" fill="url(#gDisk)"/><path d="M.600 10v3.400a2.200 2.200 0 0 0 2.200 2.200h10.200a2.200 2.200 0 0 0 2.200-2.200v-3.400" fill="none" stroke="#5f666b" stroke-width="1"/><rect x="11.400" y="11.400" width="1.500" height="2.800" fill="#44d11c"/></svg>
<div class="t" style="left:83.9px;top:235px;letter-spacing:0.013px;">Document par défaut</div>
<div class="t" style="left:353.18px;top:235px;letter-spacing:-0.010px;">Installé</div>
<svg style="left:31px;top:249px" width="16" height="17" viewBox="0 0 16 17"><path d="M3.600 .300h3v3.600h2.400l-3.900 4.100-3.900-4.100h2.400z" fill="#6fd637" stroke="#55bd28" stroke-width=".4"/><path d="M5.100 .600v6.200" stroke="#b9f293" stroke-width=".9"/><path d="M2.800 7.900h10l2.600 3h-15.200z" fill="#efefef" stroke="#c4c6c8" stroke-width=".5"/><path d="M.600 10.400h14.600v3a2.200 2.200 0 0 1-2.200 2.200h-10.200a2.200 2.200 0 0 1-2.200-2.200z" fill="url(#gDisk)"/><path d="M.600 10v3.400a2.200 2.200 0 0 0 2.200 2.200h10.200a2.200 2.200 0 0 0 2.200-2.200v-3.400" fill="none" stroke="#5f666b" stroke-width="1"/><rect x="11.400" y="11.400" width="1.500" height="2.800" fill="#44d11c"/></svg>
<div class="t" style="left:83.92px;top:252px;letter-spacing:0.012px;">Exploration de répertoire</div>
<div class="t" style="left:353.18px;top:252px;letter-spacing:-0.010px;">Installé</div>
<svg style="left:31px;top:266px" width="16" height="17" viewBox="0 0 16 17"><path d="M3.600 .300h3v3.600h2.400l-3.900 4.100-3.900-4.100h2.400z" fill="#6fd637" stroke="#55bd28" stroke-width=".4"/><path d="M5.100 .600v6.200" stroke="#b9f293" stroke-width=".9"/><path d="M2.800 7.900h10l2.600 3h-15.200z" fill="#efefef" stroke="#c4c6c8" stroke-width=".5"/><path d="M.600 10.400h14.600v3a2.200 2.200 0 0 1-2.200 2.200h-10.200a2.200 2.200 0 0 1-2.200-2.200z" fill="url(#gDisk)"/><path d="M.600 10v3.400a2.200 2.200 0 0 0 2.200 2.200h10.200a2.200 2.200 0 0 0 2.200-2.200v-3.400" fill="none" stroke="#5f666b" stroke-width="1"/><rect x="11.400" y="11.400" width="1.500" height="2.800" fill="#44d11c"/></svg>
<div class="t" style="left:83.52px;top:269px;transform:scaleX(0.9470);">Erreurs HTTP</div>
<div class="t" style="left:353.18px;top:269px;letter-spacing:-0.010px;">Installé</div>
<div class="t" style="left:83.52px;top:286px;transform:scaleX(0.9411);">Redirection HTTP</div>
<div class="t" style="left:353.33px;top:286px;letter-spacing:-0.105px;">Non installé(s)</div>
<div class="t" style="left:71.7px;top:303px;letter-spacing:-0.140px;">Développement d’applications</div>
<div class="t" style="left:353.33px;top:303px;letter-spacing:-0.105px;">Non installé(s)</div>
<div class="t" style="left:84.32px;top:320px;transform:scaleX(0.9194);">ASP.NET</div>
<div class="t" style="left:353.33px;top:320px;letter-spacing:-0.105px;">Non installé(s)</div>
<div class="t" style="left:83.52px;top:337px;transform:scaleX(0.9665);">Extensibilité .NET</div>
<div class="t" style="left:353.33px;top:337px;letter-spacing:-0.105px;">Non installé(s)</div>
<div class="t" style="left:84.29px;top:354px;transform:scaleX(0.8483);">ASP</div>
<div class="t" style="left:353.33px;top:354px;letter-spacing:-0.105px;">Non installé(s)</div>
<div class="t" style="left:84.08px;top:371px;letter-spacing:-0.272px;">CGI</div>
<div class="t" style="left:353.33px;top:371px;letter-spacing:-0.105px;">Non installé(s)</div>
</div>
<svg style="left:1048px;top:165px" width="16" height="381" viewBox="0 0 16 381"><rect width="16" height="381" fill="url(#pChk)"/></svg><div class="sbb" style="left:1048px;top:165px;width:16px;height:16px"><svg style="left:3px;top:5px" width="7" height="4" viewBox="0 0 7 4"><path d="M0 4L3.500 0.500 7 4z" fill="#000"/></svg></div><div class="sbb" style="left:1048px;top:181px;width:16px;height:119px"></div><div class="sbb" style="left:1048px;top:530px;width:16px;height:16px"><svg style="left:3px;top:5px" width="7" height="4" viewBox="0 0 7 4"><path d="M0 0L3.500 3.500 7 0z" fill="#000"/></svg></div>
<div class="hl" style="left:288px;top:546px;width:776px"></div>
<svg style="left:291px;top:549px" width="16" height="16" viewBox="0 0 16 16"><path d="M8.100 .200C12.300 .200 15.300 3.600 14.600 8.800L15.700 12.400 10.100 14.600 8.600 8.200 11.400 9.300C12 5.800 10.500 3.300 8.100 2.900z" fill="#2bc71a" stroke="#1fa012" stroke-width=".4"/><path d="M9.300 1.300c2.600.500 4.400 3 4.100 6.300" fill="none" stroke="#86f26c" stroke-width="1"/><path d="M6.950 2.240A5.300 5.300 0 0 0 6.950 12.760" fill="none" stroke="#2bc71a" stroke-width="3" stroke-dasharray="3 1.100"/></svg>
<div class="t" style="left:311.87px;top:552px;letter-spacing:0.024px;">Dernière actualisation : 31/08/2010 14:10:10</div>
<div class="t a" style="left:538.84px;top:552px;letter-spacing:-0.074px;">Configurer l’actualisation</div>
<!-- STATUS BAR -->
<div class="pane" style="left:4px;width:842px"></div>
<div class="pane" style="left:848px;width:131px"></div>
<div class="pane" style="left:981px;width:83px"></div>
</body>
</html>
